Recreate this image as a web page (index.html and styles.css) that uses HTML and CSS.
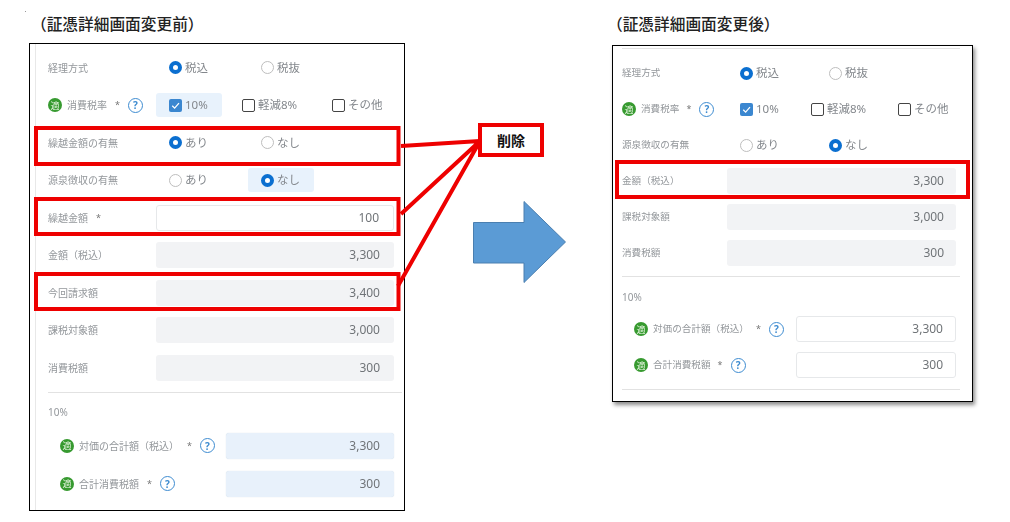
FILE: index.html
```html
<!DOCTYPE html>
<html lang="ja">
<head>
  <meta charset="UTF-8" />
  <title>証憑詳細画面変更</title>
  <link rel="stylesheet" href="styles.css">
</head>
<body>
<div class="sheet">
  <span class="speck"></span>

  <!-- before -->
  <section class="col col-before">
    <h2 class="title">（証憑詳細画面変更前）</h2>
    <div class="panel panel-before">
      <div class="row">
        <div class="label">経理方式</div>
        <div class="radios">
          <div class="opt"><i class="radio on"></i><span>税込</span></div>
          <div class="opt"><i class="radio"></i><span>税抜</span></div>
        </div>
      </div>
      <div class="row">
        <div class="label"><i class="badge">適</i>消費税率<i class="req">*</i><i class="help">?</i></div>
        <div class="checks">
          <div class="opt active"><i class="check on"><svg viewBox="0 0 12 12"><path d="M3 6.2l2.2 2.2L9.2 3.8"/></svg></i><span>10%</span></div>
          <div class="opt"><i class="check"></i><span>軽減8%</span></div>
          <div class="opt"><i class="check"></i><span>その他</span></div>
        </div>
      </div>
      <div class="row">
        <div class="label">繰越金額の有無</div>
        <div class="radios">
          <div class="opt"><i class="radio on"></i><span>あり</span></div>
          <div class="opt"><i class="radio"></i><span>なし</span></div>
        </div>
      </div>
      <div class="row">
        <div class="label">源泉徴収の有無</div>
        <div class="radios">
          <div class="opt"><i class="radio"></i><span>あり</span></div>
          <div class="opt active"><i class="radio on"></i><span>なし</span></div>
        </div>
      </div>
      <div class="row">
        <div class="label">繰越金額<i class="req">*</i></div>
        <div class="field white">100</div>
      </div>
      <div class="row">
        <div class="label">金額（税込）</div>
        <div class="field">3,300</div>
      </div>
      <div class="row">
        <div class="label">今回請求額</div>
        <div class="field">3,400</div>
      </div>
      <div class="row">
        <div class="label">課税対象額</div>
        <div class="field">3,000</div>
      </div>
      <div class="row">
        <div class="label">消費税額</div>
        <div class="field">300</div>
      </div>
      <hr class="divider">
      <div class="rate">10%</div>
      <div class="row sub">
        <div class="label"><i class="badge">適</i>対価の合計額（税込）<i class="req">*</i><i class="help">?</i></div>
        <div class="field blue">3,300</div>
      </div>
      <div class="row sub">
        <div class="label"><i class="badge">適</i>合計消費税額<i class="req">*</i><i class="help">?</i></div>
        <div class="field blue">300</div>
      </div>
    </div>
  </section>

  <!-- after -->
  <section class="col col-after">
    <h2 class="title">（証憑詳細画面変更後）</h2>
    <div class="panel panel-after">
      <hr class="divider top">
      <div class="row">
        <div class="label">経理方式</div>
        <div class="radios">
          <div class="opt"><i class="radio on"></i><span>税込</span></div>
          <div class="opt"><i class="radio"></i><span>税抜</span></div>
        </div>
      </div>
      <div class="row">
        <div class="label"><i class="badge">適</i>消費税率<i class="req">*</i><i class="help">?</i></div>
        <div class="checks">
          <div class="opt"><i class="check on"><svg viewBox="0 0 12 12"><path d="M3 6.2l2.2 2.2L9.2 3.8"/></svg></i><span>10%</span></div>
          <div class="opt"><i class="check"></i><span>軽減8%</span></div>
          <div class="opt"><i class="check"></i><span>その他</span></div>
        </div>
      </div>
      <div class="row">
        <div class="label">源泉徴収の有無</div>
        <div class="radios">
          <div class="opt"><i class="radio"></i><span>あり</span></div>
          <div class="opt"><i class="radio on"></i><span>なし</span></div>
        </div>
      </div>
      <div class="row">
        <div class="label">金額（税込）</div>
        <div class="field">3,300</div>
      </div>
      <div class="row">
        <div class="label">課税対象額</div>
        <div class="field">3,000</div>
      </div>
      <div class="row">
        <div class="label">消費税額</div>
        <div class="field">300</div>
      </div>
      <hr class="divider">
      <div class="rate">10%</div>
      <div class="row sub">
        <div class="label"><i class="badge">適</i>対価の合計額（税込）<i class="req">*</i><i class="help">?</i></div>
        <div class="field white">3,300</div>
      </div>
      <div class="row sub">
        <div class="label"><i class="badge">適</i>合計消費税額<i class="req">*</i><i class="help">?</i></div>
        <div class="field white">300</div>
      </div>
      <hr class="divider bottom">
    </div>
  </section>

  <!-- annotations drawn over the two screens -->
  <svg class="marks" viewBox="0 0 1010 522">
    <g class="red">
      <rect x="36" y="128" width="362.5" height="36"/>
      <rect x="36" y="199" width="362.5" height="35"/>
      <rect x="36" y="274" width="362.5" height="35"/>
      <rect x="617" y="162" width="351" height="35"/>
      <path d="M401 146L480 141M401 214L480 141M398 286L480 141"/>
    </g>
    <path class="arrow" d="M473.5 222.5H524V201.5L565.5 242L524 282.5V263H473.5Z"/>
  </svg>
  <div class="note">削除</div>
</div>
</body>
</html>
```

FILE: styles.css
```css
* {
  box-sizing: border-box;
}

body {
  margin: 0;
  background-color: #fff;
  font-family: "Noto Sans", "Noto Sans CJK JP", sans-serif;
  color: #6f7479;
}

i {
  font-style: normal;
}

.sheet {
  position: relative;
  display: flex;
  width: 1010px;
  height: 522px;
  padding: 12px 0 0 29px;
  overflow: hidden;
}

.speck {
  position: absolute;
  left: 25px;
  top: 11px;
  width: 1px;
  height: 1px;
  background-color: #999;
}

.col-before {
  width: 376px;
}

.col-after {
  width: 361px;
  margin-left: 207px;
}

.title {
  margin: 0;
  font-family: "Noto Sans CJK JP", sans-serif;
  font-size: 15.7px;
  font-weight: 500;
  line-height: 24px;
  color: #222;
}

.col-before .title {
  margin: 0 0 7px 2px;
}

.col-after .title {
  margin: 0 0 9px -5px;
}

.panel {
  border: 1px solid #000;
  background-color: #fff;
}

.panel-before {
  --row: 37.5px;
  --col: 108px;
  --radio-col: 92px;
  --check-a: 73px;
  --check-b: 90px;
  --sub-col: 178px;
  --label-size: 10px;
  height: 468px;
  padding: 5px 10px 0 18px;
  box-shadow: inset 5px 0 0 #fff, inset 6px 0 0 #e8e8e8;
}

.panel-after {
  --row: 36px;
  --col: 105px;
  --radio-col: 89px;
  --check-a: 71px;
  --check-b: 87px;
  --sub-col: 174px;
  --label-size: 9.6px;
  height: 357px;
  padding: 2px 16px 0 9px;
  box-shadow: 2px 3px 4px rgba(0, 0, 0, 0.45);
}

.row,
.rate {
  filter: blur(0.35px);
}

.row {
  display: grid;
  grid-template-columns: var(--col) 1fr;
  align-items: center;
  height: var(--row);
}

.row.sub {
  grid-template-columns: var(--sub-col) 1fr;
  height: 38px;
}

.panel-after .row.sub {
  height: 36px;
}

.row.sub .label {
  padding-left: 12px;
}

.label {
  display: flex;
  align-items: center;
  font-size: var(--label-size);
  line-height: 16px;
  color: #93979b;
  white-space: nowrap;
}

.badge {
  display: flex;
  flex: none;
  align-items: center;
  justify-content: center;
  width: 14px;
  height: 14px;
  margin-right: 5px;
  border-radius: 50%;
  background-color: #379a30;
  font-size: 9px;
  line-height: 1;
  color: #e6f5e0;
}

.req {
  width: 4px;
  margin-left: 8px;
  font-size: 9px;
  line-height: 10px;
  color: #777;
}

.help {
  display: flex;
  flex: none;
  align-items: center;
  justify-content: center;
  width: 15px;
  height: 15px;
  margin-left: 9px;
  border: 1.7px solid #3d8bd0;
  border-radius: 50%;
  font-size: 10px;
  font-weight: 700;
  line-height: 1;
  color: #3d8bd0;
}

.panel-after .req {
  margin-left: 7px;
}

.radios {
  display: grid;
  grid-template-columns: var(--radio-col) 1fr;
}

.checks {
  display: grid;
  grid-template-columns: var(--check-a) var(--check-b) 1fr;
}

.opt {
  display: flex;
  align-items: center;
  justify-self: start;
  height: 24px;
  padding: 0 10px 0 13px;
  border-radius: 3px;
  font-size: 11.5px;
  color: #83878c;
  white-space: nowrap;
}

.opt span {
  margin-top: -2px;
}

.opt.active {
  width: 66px;
  background-color: #e8f2fc;
}

.radio {
  flex: none;
  width: 13px;
  height: 13px;
  margin-right: 3px;
  border: 1px solid #bdbdbd;
  border-radius: 50%;
  background-color: #fff;
}

.radio.on {
  border: 4px solid #0b6fd0;
}

.check {
  flex: none;
  width: 13px;
  height: 13px;
  margin-right: 3px;
  border: 1px solid #444;
  border-radius: 2px;
  background-color: #fff;
}

.check.on {
  border: none;
  background-color: #3b87d0;
}

.check svg {
  display: block;
  width: 13px;
  height: 13px;
}

.check path {
  fill: none;
  stroke: #fff;
  stroke-width: 1.2;
}

.field {
  height: 26px;
  padding-right: 14px;
  border-radius: 3px;
  background-color: #f2f3f5;
  font-size: 12px;
  line-height: 26px;
  color: #707478;
  text-align: right;
}

.panel-after .field {
  padding-right: 12px;
}

.field.white {
  border: 1px solid #e6e8ea;
  background-color: #fff;
  line-height: 24px;
}

.field.blue {
  background-color: #e8f1fb;
  box-shadow: 0 0 1px #c9d4e0;
}

.divider {
  height: 1px;
  margin: 5px -8px 0 0;
  border: none;
  background-color: #e2e2e2;
}

.panel-after .divider {
  margin-right: -4px;
}

.divider.top {
  margin-top: 0;
  margin-bottom: 6px;
}

.divider.bottom {
  margin-top: 6px;
}

.rate {
  margin-top: 9px;
  margin-bottom: 5px;
  font-size: 10px;
  line-height: 20px;
  color: #93979b;
}

.panel-after .rate {
  margin-top: 10px;
  margin-bottom: 4px;
}

.marks {
  position: absolute;
  left: 0;
  top: 0;
  width: 1010px;
  height: 522px;
  pointer-events: none;
}

.red rect,
.red path {
  fill: none;
  stroke: #ee0000;
  stroke-width: 4;
}

.arrow {
  fill: #5b9bd5;
  stroke: #4a7fb0;
  stroke-width: 1;
}

.note {
  position: absolute;
  left: 478px;
  top: 123px;
  width: 66px;
  height: 34px;
  border: 4px solid #ee0000;
  background-color: #fff;
  font-family: "Noto Sans CJK JP", sans-serif;
  font-size: 14px;
  font-weight: 700;
  line-height: 26px;
  color: #111;
  text-align: center;
}
```
